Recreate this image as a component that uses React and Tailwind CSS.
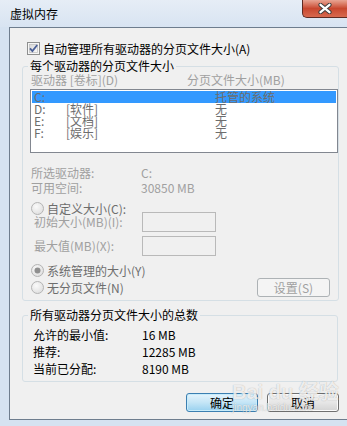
import React from "react";

const font = "font-['Noto_Sans_CJK_SC','Noto_Sans',sans-serif]";

function CheckBox() {
  return (
    <svg width="13" height="13" viewBox="0 0 13 13" className="shrink-0">
      <defs>
        <linearGradient id="cbg" x1="0" y1="0" x2="1" y2="1">
          <stop offset="0" stopColor="#d6d6d6" />
          <stop offset="1" stopColor="#fbfbfb" />
        </linearGradient>
      </defs>
      <rect x="0.5" y="0.5" width="12" height="12" fill="#f6f6f6" stroke="#8e8f8f" />
      <rect x="2.5" y="2.5" width="8" height="8" fill="url(#cbg)" stroke="#c2c2c2" strokeWidth="0.8" />
      <path d="M3 6.3 L5.4 9 L10.2 3" fill="none" stroke="#4a5f97" strokeWidth="1.8" />
    </svg>
  );
}

function Radio({ checked }) {
  return (
    <svg width="13" height="13" viewBox="0 0 13 13" className="shrink-0">
      <defs>
        <radialGradient id="rbg" cx="0.4" cy="0.35" r="0.7">
          <stop offset="0" stopColor="#fafafa" />
          <stop offset="1" stopColor="#dedede" />
        </radialGradient>
      </defs>
      <circle cx="6.5" cy="6.5" r="6" fill="url(#rbg)" stroke="#b4b4b4" />
      {checked && <circle cx="6.5" cy="6.5" r="3" fill="#8f8f8f" />}
    </svg>
  );
}

function Row({ children, className = "" }) {
  return <div className={`flex h-[12px] leading-[12px] ${className}`}>{children}</div>;
}

export default function App() {
  const drives = [
    { d: "C:", label: "", size: "托管的系统", sel: true },
    { d: "D:", label: "[软件]", size: "无" },
    { d: "E:", label: "[文档]", size: "无" },
    { d: "F:", label: "[娱乐]", size: "无" },
  ];

  return (
    <div className={`relative w-[347px] h-[426px] overflow-hidden bg-[#d5e2f1] text-[12px] leading-[12px] text-black ${font}`}>
      {/* title bar */}
      <div className="flex h-[27px] items-start justify-between bg-gradient-to-b from-[#e6edf6] to-[#d8e4f2]">
        <div className="pl-[10px] pt-[8px] text-[12px] leading-[12px]">虚拟内存</div>
        <div className="flex h-[18px] w-[45px] items-center justify-center rounded-bl-[5px] border-b border-l border-[#5e2a22] bg-gradient-to-b from-[#e8a493] via-[#c8472f] to-[#d7694f]">
          <svg width="14" height="11" viewBox="0 0 14 11">
            <path d="M2.5 1.8 L11.5 9.2 M11.5 1.8 L2.5 9.2" stroke="#3d3d3d" strokeWidth="4.2" strokeLinecap="round" />
            <path d="M2.5 1.8 L11.5 9.2 M11.5 1.8 L2.5 9.2" stroke="#ffffff" strokeWidth="2.3" strokeLinecap="round" />
          </svg>
        </div>
      </div>

      {/* client area */}
      <div className="ml-[9px] h-[393px] border-b border-l border-t border-[#6e7d8e] bg-[#f0f0f0]">
        <div className="ml-[17px] mt-[14px] flex h-[13px] items-center gap-[3px]">
          <CheckBox />
          <span>自动管理所有驱动器的分页文件大小(A)</span>
        </div>

        <fieldset className="ml-[12px] mt-[4px] h-[242px] w-[316px] rounded-[3px] border border-[#d5dfe5]">
          <legend className="ml-[5px] px-[2px] leading-[14px]">每个驱动器的分页文件大小</legend>

          <Row className="mt-[1px] pl-[8px] text-[#a0a0a0]">
            <span className="w-[156px]">驱动器 [卷标](D)</span>
            <span>分页文件大小(MB)</span>
          </Row>

          <div className="ml-[7px] mt-[3px] h-[64px] w-[308px] border border-[#828790] bg-white p-[1px] text-[#6d6d6d]">
            {drives.map((r) => (
              <Row key={r.d} className={`pl-[2px] ${r.sel ? "bg-[#3399ff]" : ""}`}>
                <span className="w-[32px]">{r.d}</span>
                <span className="w-[149px]">{r.label}</span>
                <span>{r.size}</span>
              </Row>
            ))}
          </div>

          <div className="mt-[14px] flex flex-col gap-[3px] pl-[8px] text-[#a0a0a0]">
            <Row>
              <span className="w-[110px]">所选驱动器:</span>
              <span>C:</span>
            </Row>
            <Row>
              <span className="w-[110px]">可用空间:</span>
              <span>30850 MB</span>
            </Row>
          </div>

          <div className="mt-[8px] flex h-[13px] items-center gap-[3px] pl-[8px] text-[#6d6d6d]">
            <Radio />
            <span>自定义大小(C):</span>
          </div>

          <div className="mt-[-3px] flex h-[20px] items-center pl-[11px] text-[#a0a0a0]">
            <span className="w-[108px]">初始大小(MB)(I):</span>
            <div className="h-[20px] w-[74px] border border-[#b9b9b9] bg-[#f0f0f0]" />
          </div>
          <div className="mt-[4px] flex h-[20px] items-center pl-[11px] text-[#a0a0a0]">
            <span className="w-[108px]">最大值(MB)(X):</span>
            <div className="h-[20px] w-[74px] border border-[#b9b9b9] bg-[#f0f0f0]" />
          </div>

          <div className="mt-[8px] flex h-[13px] items-center gap-[3px] pl-[8px] text-[#6d6d6d]">
            <Radio checked />
            <span>系统管理的大小(Y)</span>
          </div>

          <div className="mt-[1px] flex h-[19px] items-center pl-[8px] pr-[8px] text-[#6d6d6d]">
            <div className="flex items-center gap-[3px]">
              <Radio />
              <span>无分页文件(N)</span>
            </div>
            <div className="ml-auto flex h-[19px] w-[73px] items-center justify-center rounded-[3px] border border-[#adb2b5] bg-[#f4f4f4] text-[#a0a0a0]">
              设置(S)
            </div>
          </div>
        </fieldset>

        <fieldset className="ml-[12px] mt-[7px] h-[74px] w-[316px] rounded-[3px] border border-[#d5dfe5]">
          <legend className="ml-[5px] px-[2px] leading-[14px]">所有驱动器分页文件大小的总数</legend>
          <div className="mt-[7px] flex flex-col gap-[5px] pl-[10px]">
            <Row>
              <span className="w-[109px]">允许的最小值:</span>
              <span>16 MB</span>
            </Row>
            <Row>
              <span className="w-[109px]">推荐:</span>
              <span>12285 MB</span>
            </Row>
            <Row>
              <span className="w-[109px]">当前已分配:</span>
              <span>8190 MB</span>
            </Row>
          </div>
        </fieldset>

        <div className="ml-[176px] mt-[11px] flex gap-[9px]">
          <div className="flex h-[19px] w-[72px] items-center justify-center rounded-[3px] border border-[#3c7fb1] bg-gradient-to-b from-[#e5f4fc] via-[#c4e5f6] to-[#98d1ef] shadow-[inset_0_0_0_1px_#c8ecfb]">
            确定
          </div>
          <div className="flex h-[19px] w-[72px] items-center justify-center rounded-[3px] border border-[#707070] bg-gradient-to-b from-[#f2f2f2] via-[#e6e6e6] to-[#d3d3d3] shadow-[inset_0_0_0_1px_#fbfbfb]">
            取消
          </div>
        </div>
      </div>

      {/* watermark */}
      <div className="pointer-events-none absolute left-[232px] top-[381px] flex flex-col text-white/80 [text-shadow:0_0_1px_rgba(0,0,0,0.35)]">
        <span className="font-['Liberation_Sans','Noto_Sans_CJK_SC',sans-serif] text-[20px] font-bold leading-[22px]">Bai du 经验</span>
        <span className="font-['Liberation_Sans',sans-serif] text-[10px] leading-[10px]">jingyan.baidu.com</span>
      </div>
    </div>
  );
}
